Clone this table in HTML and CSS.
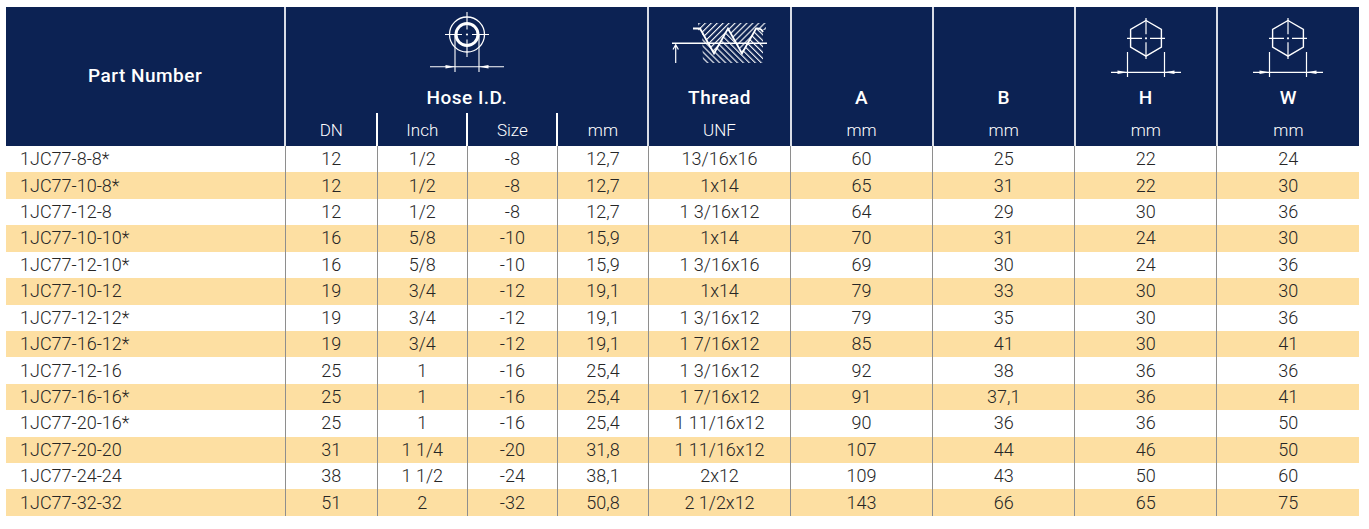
FILE: index.html
```html
<!DOCTYPE html>
<html lang="en">
<head>
<meta charset="utf-8">
<title>1JC77 Specifications</title>
<link rel="stylesheet" href="styles.css">
</head>
<body>
<div class="wrap">
<table class="spec">
  <colgroup>
    <col class="c-pn"><col class="c-dn"><col class="c-in"><col class="c-sz"><col class="c-mm">
    <col class="c-wide"><col class="c-wide"><col class="c-wide"><col class="c-wide"><col class="c-wide">
  </colgroup>
  <thead>
    <tr class="h-icons">
      <th rowspan="3" class="pn">Part Number</th>
      <th colspan="4" class="grp">
        <svg class="ico ico-hose" width="80" height="70" viewBox="0 0 80 70">
          <g fill="none" stroke="#fff">
            <circle cx="40" cy="26.5" r="17.5" stroke-width="1.3"/>
            <circle cx="40" cy="26.5" r="11" stroke-width="3"/>
            <path d="M18 26.5H35M45 26.5H62M40 4V21.5M40 31.5V49" stroke-width="1.1"/>
            <path d="M28 27V64M52 27V64" stroke-width="1.1"/>
            <path d="M3 58.7H77" stroke-width="1.1"/>
          </g>
          <circle cx="40" cy="26.5" r="1.1" fill="#fff"/>
          <path d="M28 58.7L18.5 56.9L18.5 60.5Z M52 58.7L61.5 56.9L61.5 60.5Z" fill="#fff"/>
        </svg>
      </th>
      <th class="grp">
        <svg class="ico ico-thread" width="104" height="48" viewBox="0 0 104 48">
          <defs>
            <pattern id="hatchUp" width="4.2" height="4.2" patternUnits="userSpaceOnUse" patternTransform="rotate(45)">
              <line x1="0.6" y1="0" x2="0.6" y2="4.2" stroke="#fff" stroke-width="1.1"/>
            </pattern>
            <pattern id="hatchDown" width="4.2" height="4.2" patternUnits="userSpaceOnUse" patternTransform="rotate(-45)">
              <line x1="0.6" y1="0" x2="0.6" y2="4.2" stroke="#fff" stroke-width="1.1"/>
            </pattern>
          </defs>
          <path d="M30 5H98V12H88L74 35.5L60 10.5L46 35.5L34 14L30 12Z" fill="url(#hatchUp)"/>
          <path d="M34 14L46 35.5L60 10.5L74 35.5L88 10.5L95 14V45H35Z" fill="url(#hatchDown)"/>
          <path d="M25 10.5H32L46 35.5L60 10.5L74 35.5L88 10.5Q93 10 95 14" fill="none" stroke="#fff" stroke-width="1.8"/>
          <path d="M4 25.3H99" stroke="#fff" stroke-width="1.5"/>
          <path d="M7.7 27V45M5 31.5L7.7 26.8L10.4 31.5" fill="none" stroke="#fff" stroke-width="1.2"/>
        </svg>
      </th>
      <th class="grp"></th>
      <th class="grp"></th>
      <th class="grp">
        <svg class="ico ico-hex" width="80" height="66" viewBox="0 0 80 66">
          <g fill="none" stroke="#fff" stroke-width="1.2">
            <path d="M40 5.5L55.4 14.4V32.2L40 41.1L24.6 32.2V14.4Z" stroke-width="1.4"/>
            <path d="M21 23.3H36M44 23.3H59M40 3V19.3M40 27.3V44"/>
            <path d="M21.5 37V62M58.5 37V62"/>
            <path d="M5 57.3H75"/>
          </g>
          <circle cx="40" cy="23.3" r="1.1" fill="#fff"/>
          <path d="M21.5 57.3L11.5 55.6L11.5 59Z M58.5 57.3L68.5 55.6L68.5 59Z" fill="#fff"/>
        </svg>
      </th>
      <th class="grp">
        <svg class="ico ico-hex" width="80" height="66" viewBox="0 0 80 66">
          <g fill="none" stroke="#fff" stroke-width="1.2">
            <path d="M40 5.5L55.4 14.4V32.2L40 41.1L24.6 32.2V14.4Z" stroke-width="1.4"/>
            <path d="M21 23.3H36M44 23.3H59M40 3V19.3M40 27.3V44"/>
            <path d="M21.5 37V62M58.5 37V62"/>
            <path d="M5 57.3H75"/>
          </g>
          <circle cx="40" cy="23.3" r="1.1" fill="#fff"/>
          <path d="M21.5 57.3L11.5 55.6L11.5 59Z M58.5 57.3L68.5 55.6L68.5 59Z" fill="#fff"/>
        </svg>
      </th>
    </tr>
    <tr class="h-labels">
      <th colspan="4" class="grp">Hose I.D.</th>
      <th class="grp">Thread</th>
      <th class="grp">A</th>
      <th class="grp">B</th>
      <th class="grp">H</th>
      <th class="grp">W</th>
    </tr>
    <tr class="h-units">
      <th class="grp">DN</th>
      <th class="sub">Inch</th>
      <th class="sub">Size</th>
      <th class="sub">mm</th>
      <th class="grp">UNF</th>
      <th class="grp">mm</th>
      <th class="grp">mm</th>
      <th class="grp">mm</th>
      <th class="grp">mm</th>
    </tr>
  </thead>
  <tbody>
    <tr><td>1JC77-8-8*</td><td>12</td><td>1/2</td><td>-8</td><td>12,7</td><td>13/16x16</td><td>60</td><td>25</td><td>22</td><td>24</td></tr>
    <tr><td>1JC77-10-8*</td><td>12</td><td>1/2</td><td>-8</td><td>12,7</td><td>1x14</td><td>65</td><td>31</td><td>22</td><td>30</td></tr>
    <tr><td>1JC77-12-8</td><td>12</td><td>1/2</td><td>-8</td><td>12,7</td><td>1 3/16x12</td><td>64</td><td>29</td><td>30</td><td>36</td></tr>
    <tr><td>1JC77-10-10*</td><td>16</td><td>5/8</td><td>-10</td><td>15,9</td><td>1x14</td><td>70</td><td>31</td><td>24</td><td>30</td></tr>
    <tr><td>1JC77-12-10*</td><td>16</td><td>5/8</td><td>-10</td><td>15,9</td><td>1 3/16x16</td><td>69</td><td>30</td><td>24</td><td>36</td></tr>
    <tr><td>1JC77-10-12</td><td>19</td><td>3/4</td><td>-12</td><td>19,1</td><td>1x14</td><td>79</td><td>33</td><td>30</td><td>30</td></tr>
    <tr><td>1JC77-12-12*</td><td>19</td><td>3/4</td><td>-12</td><td>19,1</td><td>1 3/16x12</td><td>79</td><td>35</td><td>30</td><td>36</td></tr>
    <tr><td>1JC77-16-12*</td><td>19</td><td>3/4</td><td>-12</td><td>19,1</td><td>1 7/16x12</td><td>85</td><td>41</td><td>30</td><td>41</td></tr>
    <tr><td>1JC77-12-16</td><td>25</td><td>1</td><td>-16</td><td>25,4</td><td>1 3/16x12</td><td>92</td><td>38</td><td>36</td><td>36</td></tr>
    <tr><td>1JC77-16-16*</td><td>25</td><td>1</td><td>-16</td><td>25,4</td><td>1 7/16x12</td><td>91</td><td>37,1</td><td>36</td><td>41</td></tr>
    <tr><td>1JC77-20-16*</td><td>25</td><td>1</td><td>-16</td><td>25,4</td><td>1 11/16x12</td><td>90</td><td>36</td><td>36</td><td>50</td></tr>
    <tr><td>1JC77-20-20</td><td>31</td><td>1 1/4</td><td>-20</td><td>31,8</td><td>1 11/16x12</td><td>107</td><td>44</td><td>46</td><td>50</td></tr>
    <tr><td>1JC77-24-24</td><td>38</td><td>1 1/2</td><td>-24</td><td>38,1</td><td>2x12</td><td>109</td><td>43</td><td>50</td><td>60</td></tr>
    <tr><td>1JC77-32-32</td><td>51</td><td>2</td><td>-32</td><td>50,8</td><td>2 1/2x12</td><td>143</td><td>66</td><td>65</td><td>75</td></tr>
  </tbody>
</table>
</div>
</body>
</html>
```

FILE: styles.css
```css
body {
  margin: 0;
  background: #ffffff;
  font-family: Roboto, "Liberation Sans", Arial, sans-serif;
}

.wrap {
  padding: 7px 0 0 6px;
}

.spec {
  border-collapse: collapse;
  table-layout: fixed;
  width: 1353px;
}

.c-pn { width: 279px; }
.c-dn { width: 92px; }
.c-in { width: 90px; }
.c-sz { width: 90px; }
.c-mm { width: 91px; }
.c-wide { width: 142px; }

.spec th {
  background: #0c2253;
  color: #ffffff;
  padding: 0;
  text-align: center;
  font-weight: 500;
}

.spec th.grp {
  border-left: 2px solid #d9dde6;
}

.spec th.sub {
  border-left: 2px solid #ffffff;
}

.h-icons {
  height: 75px;
}

.h-icons th {
  vertical-align: top;
}

.ico {
  display: block;
  margin: 0 auto;
}

.ico-hose { margin-top: 1px; }
.ico-thread { margin-top: 11px; }
.ico-hex { margin-top: 8px; }

.h-icons th.pn {
  font-size: 19px;
  font-weight: 500;
  letter-spacing: 0.5px;
  vertical-align: middle;
  padding-bottom: 2px;
}

.h-labels {
  height: 31px;
}

.h-labels th {
  font-size: 19px;
  font-weight: 500;
  letter-spacing: 0.5px;
  vertical-align: middle;
}

.h-units {
  height: 33px;
}

.h-units th {
  font-size: 17px;
  font-weight: 300;
  vertical-align: middle;
}

.spec td {
  height: 26.43px;
  padding: 0;
  text-align: center;
  font-size: 18px;
  font-weight: 300;
  color: #262626;
  border-left: 1px solid #8e8e8e;
  line-height: 1;
  white-space: nowrap;
}

.spec td:first-child {
  text-align: left;
  padding-left: 14px;
  border-left: none;
}

.spec tbody tr:nth-child(even) td {
  background: #fddfa2;
}
```
